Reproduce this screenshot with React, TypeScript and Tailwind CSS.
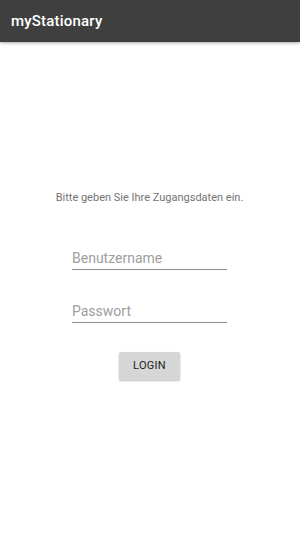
export default function App() {
    return (
        <div className="w-[300px] h-[544px] bg-white flex flex-col" style={{ fontFamily: "Roboto, 'Liberation Sans', sans-serif" }}>
            <header className="h-[42px] bg-[#3f3f3f] flex items-center px-[11px] shadow-[0_1px_3px_rgba(0,0,0,0.35)] z-10">
                <h1 className="text-white text-[15px] font-medium tracking-[0.2px]">myStationary</h1>
            </header>
            <main className="flex flex-col items-center pr-[1px]">
                <p className="mt-[149px] text-[11px] text-[#737373] leading-[13px]">Bitte geben Sie Ihre Zugangsdaten ein.</p>
                <div className="mt-[47px] w-[155px] border-b border-[#8a8a8a] pb-[3px] text-[14px] text-[#9e9e9e] leading-[15px]">
                    Benutzername
                </div>
                <div className="mt-[34px] w-[155px] border-b border-[#8a8a8a] pb-[3px] text-[14px] text-[#9e9e9e] leading-[15px]">
                    Passwort
                </div>
                <button className="mt-[29px] w-[61px] h-[28px] bg-[#d6d6d6] rounded-[2px] shadow-[0_1px_2px_rgba(0,0,0,0.25)] text-[11px] font-normal text-[#222] tracking-[0.3px]">
                    LOGIN
                </button>
            </main>
        </div>
    )
}
